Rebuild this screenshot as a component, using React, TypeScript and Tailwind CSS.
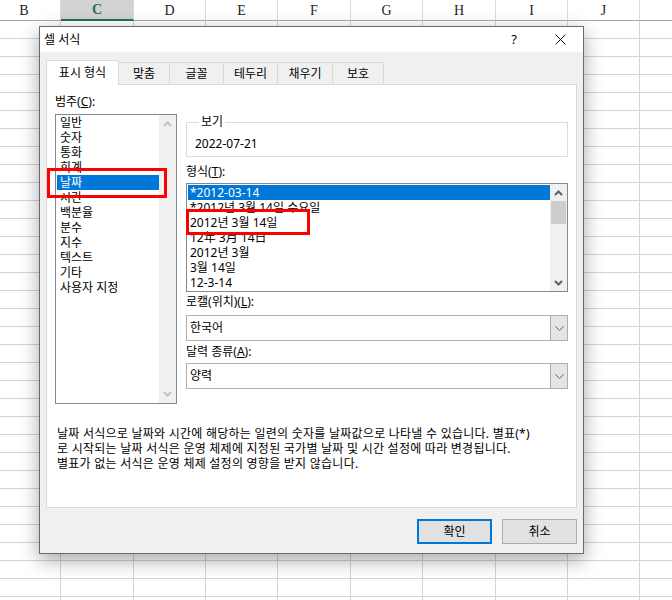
import React from "react";

const COLS = [
  { label: "B", w: "w-[73px]" },
  { label: "C", w: "w-[73px]", active: true },
  { label: "D", w: "w-[72px]" },
  { label: "E", w: "w-[72px]" },
  { label: "F", w: "w-[73px]" },
  { label: "G", w: "w-[72px]" },
  { label: "H", w: "w-[73px]" },
  { label: "I", w: "w-[72px]" },
  { label: "J", w: "w-[72px]" },
  { label: "", w: "w-[72px]" },
];

const TABS = [
  { label: "표시 형식", w: "w-[73px]", active: true },
  { label: "맞춤", w: "w-[52px]" },
  { label: "글꼴", w: "w-[55px]" },
  { label: "테두리", w: "w-[55px]" },
  { label: "채우기", w: "w-[56px]" },
  { label: "보호", w: "w-[52px]" },
];

const CATEGORIES = [
  "일반",
  "숫자",
  "통화",
  "회계",
  "날짜",
  "시간",
  "백분율",
  "분수",
  "지수",
  "텍스트",
  "기타",
  "사용자 지정",
];

const FORMATS = [
  "*2012-03-14",
  "*2012년 3월 14일 수요일",
  "2012년 3월 14일",
  "12年 3月 14日",
  "2012년 3월",
  "3월 14일",
  "12-3-14",
];

function Chevron({ up, color }: { up?: boolean; color: string }) {
  return (
    <svg width="9" height="6" viewBox="0 0 9 6">
      <path
        d={up ? "M1 5 L4.5 1.5 L8 5" : "M1 1 L4.5 4.5 L8 1"}
        stroke={color}
        strokeWidth="2"
        fill="none"
      />
    </svg>
  );
}

function Combo({ value }: { value: string }) {
  return (
    <div className="flex h-[26px] border border-[#adadad] bg-white">
      <div className="flex-1 pl-[3px] leading-[24px]">{value}</div>
      <div className="flex w-[17px] items-center justify-center border-l border-[#adadad] bg-[#e5e5e5]">
        <svg width="9" height="5" viewBox="0 0 9 5">
          <path d="M0.5 0.5 L4.5 4.5 L8.5 0.5" stroke="#606060" strokeWidth="1" fill="none" />
        </svg>
      </div>
    </div>
  );
}

function Sheet() {
  return (
    <div className="-ml-[12px] flex flex-col">
      <div className="flex">
        {COLS.map((c) => (
          <div
            key={c.label + "h"}
            className={`flex h-[21px] shrink-0 items-center justify-center border-r border-r-[#dadada] font-['Liberation_Serif',serif] text-[14px] ${c.w} ${
              c.active
                ? "border-b-2 border-b-[#217346] bg-[#d2d2d2] font-bold text-[#217346]"
                : "border-b border-b-[#a8a8a8] text-[#222]"
            }`}
          >
            {c.label}
          </div>
        ))}
      </div>
      {Array.from({ length: 33 }).map((_, r) => (
        <div key={r} className="flex">
          {COLS.map((c) => (
            <div
              key={c.label + r}
              className={`h-[18px] shrink-0 border-r border-b border-[#d4d4d4] ${c.w}`}
            />
          ))}
        </div>
      ))}
    </div>
  );
}

function Dialog() {
  return (
    <div className="absolute left-[39px] top-[26px] flex h-[528px] w-[545px] flex-col border border-[#6a6a6a] bg-white text-[12px] text-black shadow-[0_6px_18px_rgba(0,0,0,0.35)]">
      <div className="flex h-[25px] items-center bg-white pl-[4px]">
        <span>셀 서식</span>
        <div className="ml-auto flex">
          <div className="flex w-[46px] justify-center text-[13px]">?</div>
          <div className="flex w-[46px] items-center justify-center">
            <svg width="11" height="11" viewBox="0 0 11 11">
              <path d="M0.5 0.5 L10.5 10.5 M10.5 0.5 L0.5 10.5" stroke="#111" strokeWidth="1" />
            </svg>
          </div>
        </div>
      </div>

      <div className="flex flex-1 flex-col bg-[#f0f0f0] px-[6px] pt-[8px]">
        <div className="flex h-[24px] items-end">
          {TABS.map((t, i) => (
            <div
              key={t.label}
              className={`flex items-center justify-center border-x border-t border-[#d9d9d9] ${t.w} ${
                i > 0 ? "-ml-px" : ""
              } ${t.active ? "relative z-10 -mb-px h-[25px] bg-white" : "h-[22px] bg-[#f0f0f0]"}`}
            >
              {t.label}
            </div>
          ))}
        </div>

        <div className="h-[424px] border border-[#d9d9d9] bg-white pl-[8px] pt-[9px]">
          <div className="flex">
            <div className="w-[122px]">
              <div className="leading-[16px]">
                범주(<span className="underline">C</span>):
              </div>
              <div className="mt-[4px] flex h-[290px] border border-[#828790]">
                <div className="flex-1 pl-[1px]">
                  {CATEGORIES.map((c) => (
                    <div
                      key={c}
                      className={`h-[15px] pl-[3px] leading-[15px] ${
                        c === "날짜" ? "bg-[#0078d7] text-white" : ""
                      }`}
                    >
                      {c}
                    </div>
                  ))}
                </div>
                <div className="flex w-[17px] flex-col items-center justify-between bg-[#f0f0f0] py-[6px]">
                  <Chevron up color="#c2c2c2" />
                  <Chevron color="#c2c2c2" />
                </div>
              </div>
            </div>

            <div className="ml-[9px] w-[382px]">
              <fieldset className="mt-[20px] border border-[#dcdcdc] pb-[4px] pl-[8px]">
                <legend className="ml-[4px] px-[2px] leading-[16px]">보기</legend>
                <div className="pt-[6px] leading-[16px]">2022-07-21</div>
              </fieldset>

              <div className="mt-[7px] leading-[16px]">
                형식(<span className="underline">T</span>):
              </div>
              <div className="mt-[3px] flex h-[109px] border border-[#828790]">
                <div className="flex-1 pl-[1px] pt-[1px]">
                  {FORMATS.map((f, i) => (
                    <div
                      key={f}
                      className={`h-[15px] whitespace-nowrap pl-[2px] leading-[15px] ${
                        i === 0 ? "bg-[#0078d7] text-white" : ""
                      }`}
                    >
                      {f}
                    </div>
                  ))}
                </div>
                <div className="flex w-[17px] flex-col bg-[#f0f0f0]">
                  <div className="flex h-[17px] items-center justify-center">
                    <Chevron up color="#606060" />
                  </div>
                  <div className="mx-[1px] h-[23px] bg-[#cdcdcd]" />
                  <div className="flex-1" />
                  <div className="flex h-[17px] items-center justify-center">
                    <Chevron color="#606060" />
                  </div>
                </div>
              </div>

              <div className="mt-[2px] leading-[16px]">
                로캘(위치)(<span className="underline">L</span>):
              </div>
              <div className="mt-[5px]">
                <Combo value="한국어" />
              </div>
              <div className="mt-[3px] leading-[16px]">
                달력 종류(<span className="underline">A</span>):
              </div>
              <div className="mt-[3px]">
                <Combo value="양력" />
              </div>
            </div>
          </div>

          <div className="ml-[2px] mt-[22px] leading-[15px] tracking-[0.25px]">
            <div className="whitespace-nowrap">
              날짜 서식으로 날짜와 시간에 해당하는 일련의 숫자를 날짜값으로 나타낼 수 있습니다. 별표(*)
            </div>
            <div className="whitespace-nowrap">
              로 시작되는 날짜 서식은 운영 체제에 지정된 국가별 날짜 및 시간 설정에 따라 변경됩니다.
            </div>
            <div className="whitespace-nowrap">
              별표가 없는 서식은 운영 체제 설정의 영향을 받지 않습니다.
            </div>
          </div>
        </div>

        <div className="mt-[11px] flex justify-end gap-[10px]">
          <button
            type="button"
            className="h-[25px] w-[75px] border-2 border-[#0078d7] bg-[#e1e1e1]"
          >
            확인
          </button>
          <button
            type="button"
            className="h-[25px] w-[75px] border border-[#adadad] bg-[#e1e1e1]"
          >
            취소
          </button>
        </div>
      </div>
    </div>
  );
}

export default function App() {
  return (
    <div className="relative h-[600px] w-[672px] overflow-hidden bg-white font-['Noto_Sans','Noto_Sans_CJK_KR',sans-serif]">
      <Sheet />
      <Dialog />
      <div className="absolute left-[47px] top-[168px] h-[30px] w-[120px] border-[3px] border-[#ff0000]" />
      <div className="absolute left-[186px] top-[209px] h-[26px] w-[124px] border-[3px] border-[#ff0000]" />
    </div>
  );
}
